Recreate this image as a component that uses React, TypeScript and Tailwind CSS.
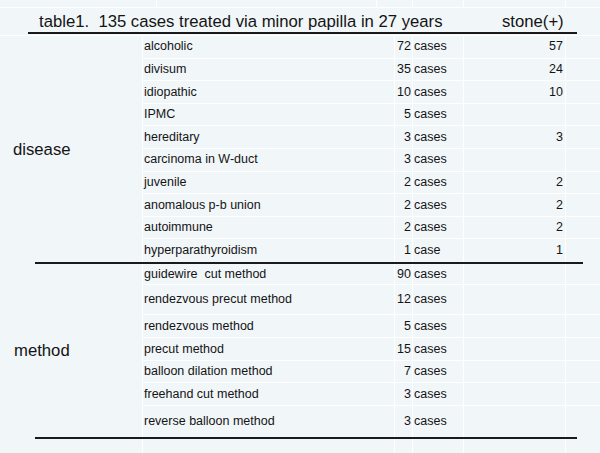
import React from "react";

type Row = { item: string; n: string; unit: string; stone?: string; h: string };

const disease: Row[] = [
  { item: "alcoholic", n: "72", unit: "cases", stone: "57", h: "h-[22.6px]" },
  { item: "divisum", n: "35", unit: "cases", stone: "24", h: "h-[22.6px]" },
  { item: "idiopathic", n: "10", unit: "cases", stone: "10", h: "h-[22.6px]" },
  { item: "IPMC", n: "5", unit: "cases", h: "h-[22.6px]" },
  { item: "hereditary", n: "3", unit: "cases", stone: "3", h: "h-[22.6px]" },
  { item: "carcinoma in W-duct", n: "3", unit: "cases", h: "h-[22.6px]" },
  { item: "juvenile", n: "2", unit: "cases", stone: "2", h: "h-[22.6px]" },
  { item: "anomalous p-b union", n: "2", unit: "cases", stone: "2", h: "h-[22.6px]" },
  { item: "autoimmune", n: "2", unit: "cases", stone: "2", h: "h-[22.6px]" },
  { item: "hyperparathyroidism", n: "1", unit: "case", stone: "1", h: "h-[22.6px]" },
];

const method: Row[] = [
  { item: "guidewire  cut method", n: "90", unit: "cases", h: "h-[21px]" },
  { item: "rendezvous precut method", n: "12", unit: "cases", h: "h-[30px]" },
  { item: "rendezvous method", n: "5", unit: "cases", h: "h-[23px]" },
  { item: "precut method", n: "15", unit: "cases", h: "h-[23px]" },
  { item: "balloon dilation method", n: "7", unit: "cases", h: "h-[22.5px]" },
  { item: "freehand cut method", n: "3", unit: "cases", h: "h-[22.5px]" },
  { item: "reverse balloon method", n: "3", unit: "cases", h: "h-[31px]" },
];

function DataRow({ r, last }: { r: Row; last?: boolean }) {
  return (
    <div className={`flex ${r.h} ${last ? "" : "border-b border-white"}`}>
      <div className="w-[252px] border-r border-white flex items-center pl-[1px] whitespace-pre">{r.item}</div>
      <div className="w-[18px] border-r border-white flex items-center justify-end pr-[1px]">{r.n}</div>
      <div className="w-[51px] border-r border-white flex items-center pl-[1px]">{r.unit}</div>
      <div className="w-[102px] border-r border-white flex items-center justify-end pr-[2px]">{r.stone ?? ""}</div>
      <div className="flex-1"></div>
    </div>
  );
}

export default function App() {
  return (
    <div
      className="w-[600px] h-[453px] bg-[#f1f6f9] text-[#141414] overflow-hidden flex flex-col"
      style={{ fontFamily: '"Liberation Sans", Arial, sans-serif' }}
    >
      {/* top strip */}
      <div className="flex h-[8px] border-b border-white shrink-0">
        <div className="w-[157px] border-r border-white"></div>
        <div className="w-[220px] border-r border-white"></div>
        <div className="w-[36px] border-r border-white"></div>
        <div className="w-[51px] border-r border-white"></div>
        <div className="w-[102px] border-r border-white"></div>
        <div className="flex-1"></div>
      </div>

      {/* header */}
      <div className="flex flex-col h-[28px] border-b border-white shrink-0">
        <div className="flex h-[24px] items-end text-[16.7px] leading-none pb-[1px]">
          <div className="w-[502px] pl-[39px] whitespace-pre">table1.  135 cases treated via minor papilla in 27 years</div>
          <div>stone(+)</div>
        </div>
        <div className="ml-[28px] w-[549px] h-[2px] bg-[#1a1a1a]"></div>
      </div>

      {/* disease */}
      <div className="flex text-[12.5px] shrink-0">
        <div className="w-[143px] border-r border-white flex items-center pl-[13px] pt-[2px] text-[16.7px]">disease</div>
        <div className="flex-1 flex flex-col">
          {disease.map((r, i) => (
            <DataRow key={r.item} r={r} last={i === disease.length - 1} />
          ))}
        </div>
      </div>

      <div className="ml-[35px] w-[548px] h-[2px] bg-[#1a1a1a] shrink-0"></div>

      {/* method */}
      <div className="flex text-[12.5px] shrink-0">
        <div className="w-[143px] border-r border-white flex items-center pl-[14px] text-[16.7px]">method</div>
        <div className="flex-1 flex flex-col">
          {method.map((r, i) => (
            <DataRow key={r.item} r={r} last={i === method.length - 1} />
          ))}
        </div>
      </div>

      <div className="ml-[35px] w-[542px] h-[2px] bg-[#1a1a1a] shrink-0"></div>

      {/* bottom filler */}
      <div className="flex flex-1">
        <div className="w-[143px] border-r border-white"></div>
        <div className="w-[252px] border-r border-white"></div>
        <div className="w-[18px] border-r border-white"></div>
        <div className="w-[51px] border-r border-white"></div>
        <div className="w-[102px] border-r border-white"></div>
        <div className="flex-1"></div>
      </div>
    </div>
  );
}
